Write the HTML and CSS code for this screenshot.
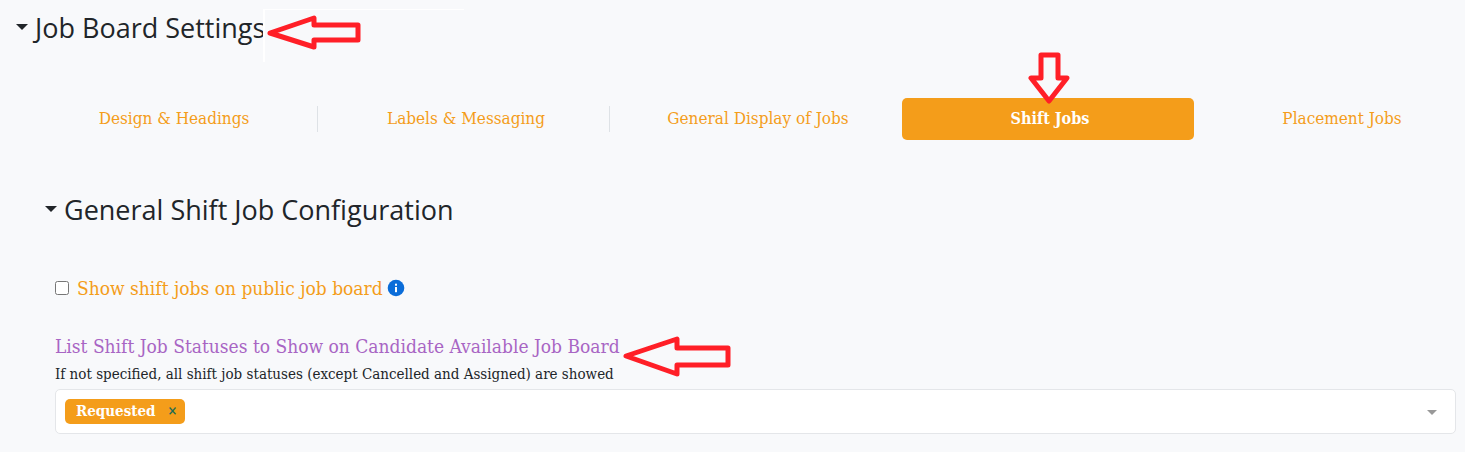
FILE: index.html
```html
<!DOCTYPE html>
<html lang="en">
<head>
  <meta charset="UTF-8">
  <meta name="viewport" content="width=device-width, initial-scale=1.0">
  <title>Job Board Settings</title>
  <link rel="stylesheet" href="styles.css">
</head>
<body>

  <!-- Job Board Settings -->
  <section class="settings">
    <h1 class="section-title">
      <button type="button" class="toggle"><span class="caret"></span>Job Board Settings</button>
    </h1>

    <!-- Tabs -->
    <nav class="tabs">
      <a href="#design" class="tab divider">Design &amp; Headings</a>
      <a href="#labels" class="tab divider">Labels &amp; Messaging</a>
      <a href="#general" class="tab">General Display of Jobs</a>
      <a href="#shift" class="tab active">Shift Jobs</a>
      <a href="#placement" class="tab">Placement Jobs</a>
    </nav>

    <!-- Shift Jobs tab content -->
    <div class="tab-content" id="shift">
      <h2 class="section-title">
        <button type="button" class="toggle"><span class="caret"></span>General Shift Job Configuration</button>
      </h2>

      <div class="fields">
        <div class="check-row">
          <input type="checkbox" id="show-shift-jobs">
          <label for="show-shift-jobs">Show shift jobs on public job board</label>
          <svg class="info-icon" viewBox="0 0 18 18" role="img" aria-label="Info">
            <circle cx="9" cy="9" r="8.3" fill="#0b6dd9"/>
            <rect x="8" y="4.7" width="2" height="2" fill="#fff"/>
            <rect x="8" y="8" width="2" height="5.2" fill="#fff"/>
          </svg>
        </div>

        <label class="field-label" for="statuses">List Shift Job Statuses to Show on Candidate Available Job Board</label>
        <p class="help">If not specified, all shift job statuses (except Cancelled and Assigned) are showed</p>
        <div class="multi-select">
          <span class="chip">Requested <button type="button" aria-label="Remove Requested">×</button></span>
          <select id="statuses">
            <option value=""></option>
          </select>
        </div>
      </div>
    </div>
  </section>

  <!-- Callout arrows -->
  <div class="callout-box"></div>
  <svg class="arrow arrow-title" viewBox="0 0 96 38">
    <path d="M5 20 L49 5 V12 H93 V27 H49 V34 Z"/>
  </svg>
  <svg class="arrow arrow-tab" viewBox="0 0 42 54">
    <path d="M13 4 H30 V27 H39 L21 50 L3 27 H13 Z"/>
  </svg>
  <svg class="arrow arrow-statuses" viewBox="0 0 110 42">
    <path d="M4 20 L55 3 V12 H106 V29 H55 V38 Z"/>
  </svg>

</body>
</html>
```

FILE: styles.css
```css
/* Overall Styling */
* {
  box-sizing: border-box;
}

body {
  margin: 0;
  background-color: #f8f9fb;
  color: #212529;
  font-family: "DejaVu Serif Condensed", "DejaVu Serif", serif;
  font-size: 17px;
  overflow-x: hidden;
}

/* Section Headings */
.settings {
  padding: 8px 0 18px;
}

.section-title {
  margin: 0;
  padding-left: 16px;
  font-weight: 400;
}

.toggle {
  display: flex;
  align-items: center;
  gap: 7px;
  padding: 0;
  border: none;
  background: none;
  color: #212529;
  font-family: "Open Sans", sans-serif;
  font-size: 27px;
  line-height: 40px;
  cursor: pointer;
}

.caret {
  border: 6px solid transparent;
  border-top-color: #212529;
  border-bottom: none;
  margin-bottom: 2px;
}

/* Tabs */
.tabs {
  display: grid;
  grid-template-columns: repeat(5, 1fr);
  margin: 50px -21px 0 26px;
}

.tab {
  display: flex;
  align-items: center;
  justify-content: center;
  height: 42px;
  padding: 0 0 2px 4px;
  border-radius: 5px;
  color: #f49d1a;
  text-decoration: none;
  position: relative;
}

.tab.active {
  background-color: #f49d1a;
  color: #fff;
  font-size: 16px;
  font-weight: bold;
}

.tab.divider::after {
  content: "";
  position: absolute;
  right: 0;
  top: 8px;
  width: 1px;
  height: 26px;
  background-color: #dee2e6;
}

/* Tab Content */
.tab-content {
  padding: 50px 9px 0 29px;
}

.fields {
  padding: 44px 0 0 26px;
}

.check-row {
  display: flex;
  align-items: center;
  height: 28px;
  color: #f49d1a;
  font-size: 19px;
}

.check-row input {
  width: 14px;
  height: 14px;
  margin: 0 8px 0 0;
}

.info-icon {
  width: 18px;
  height: 18px;
  margin-left: 4px;
}

.field-label {
  display: block;
  margin-top: 30px;
  color: #a865c4;
  font-size: 19px;
  font-weight: 500;
  line-height: 28px;
}

.help {
  margin: 3px 0 4px;
  font-size: 15px;
  line-height: 22px;
}

/* Multi Select */
.multi-select {
  display: flex;
  align-items: center;
  height: 45px;
  padding: 0 18px 0 9px;
  border: 1px solid #e4e6e9;
  border-radius: 5px;
  background-color: #fff;
}

.multi-select select {
  flex: 1;
  height: 40px;
  border: none;
  appearance: none;
  background: none;
}

.multi-select::after {
  content: "";
  border: 5px solid transparent;
  border-top-color: #999;
  border-bottom: none;
  margin-top: 2px;
}

.chip {
  display: flex;
  align-items: center;
  gap: 12px;
  height: 25px;
  padding: 0 8px 2px 11px;
  border-radius: 5px;
  background-color: #f49d1a;
  color: #fff;
  font-size: 15px;
  font-weight: bold;
}

.chip button {
  padding: 0;
  border: none;
  background: none;
  color: #1d6b52;
  font-family: inherit;
  font-size: 13px;
  font-weight: bold;
  cursor: pointer;
}

/* Callout Arrows */
.callout-box {
  position: absolute;
  left: 263px;
  top: 9px;
  width: 201px;
  height: 53px;
  border-top: 1px solid #fff;
  border-left: 2px solid #fff;
}

.arrow {
  position: absolute;
  fill: none;
  stroke: #ff1f27;
  stroke-width: 5;
  stroke-linejoin: round;
  pointer-events: none;
}

.arrow-title {
  left: 265px;
  top: 13px;
  width: 96px;
  height: 38px;
}

.arrow-tab {
  left: 1028px;
  top: 51px;
  width: 42px;
  height: 54px;
}

.arrow-statuses {
  left: 622px;
  top: 336px;
  width: 110px;
  height: 42px;
}
```
